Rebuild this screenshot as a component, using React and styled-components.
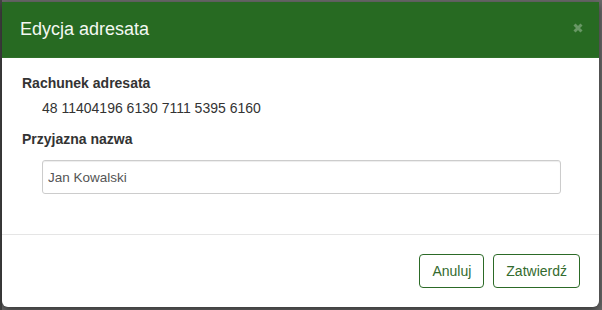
import React, { useState } from 'react';
import styled, { createGlobalStyle } from 'styled-components';

const GlobalStyle = createGlobalStyle`
  html, body {
    margin: 0;
    padding: 0;
    background: #5e5e5e;
  }
  body {
    font-family: "Liberation Sans", Arial, Helvetica, sans-serif;
    font-size: 14px;
    line-height: 1.42857;
    color: #333;
  }
`;

const Backdrop = styled.div`
  width: 602px;
  height: 310px;
  padding: 2px 0 0 2px;
  box-sizing: border-box;
  background: linear-gradient(to right, #454545 0, #454545 2px, #6a6a6a 2px);
`;

const Modal = styled.div`
  width: 597px;
  background: #fff;
  border-radius: 0 0 6px 6px;
  box-shadow: 0 3px 9px rgba(0, 0, 0, 0.5);
  overflow: hidden;
`;

const Header = styled.div`
  display: flex;
  align-items: center;
  justify-content: space-between;
  height: 55px;
  padding: 0 14px 0 18px;
  background: #276a22;
  border-bottom: 1px solid #2f7029;
`;

const Title = styled.h4`
  margin: 0;
  font-size: 18px;
  font-weight: 500;
  color: #f3f8f2;
  line-height: 1.42857;
`;

const Close = styled.button`
  display: flex;
  align-items: center;
  justify-content: center;
  width: 14px;
  height: 14px;
  border: 0;
  padding: 0;
  margin-top: -3px;
  background: transparent;
  color: #fff;
  opacity: 0.3;
  cursor: pointer;
`;

const Body = styled.div`
  padding: 15px 38px 40px 20px;
`;

const Label = styled.div`
  font-weight: 700;
  line-height: 20px;
  margin-bottom: ${(p) => p.$gap || 5}px;
`;

const Value = styled.div`
  padding-left: 20px;
  line-height: 20px;
  margin-bottom: 11px;
`;

const Input = styled.input`
  display: block;
  box-sizing: border-box;
  width: calc(100% - 20px);
  height: 34px;
  margin-left: 20px;
  padding: 6px 5px;
  border: 1px solid #ccc;
  border-radius: 3px;
  box-shadow: inset 0 1px 1px rgba(0, 0, 0, 0.075);
  font-family: inherit;
  font-size: 13.5px;
  color: #555;
  outline: none;
`;

const Footer = styled.div`
  display: flex;
  justify-content: flex-end;
  gap: 9px;
  padding: 19px 19px 19px;
  border-top: 1px solid #e5e5e5;
`;

const Button = styled.button`
  height: 34px;
  padding: 6px 12px;
  background: #fff;
  border: 1px solid #2c6a27;
  border-radius: 4px;
  font-family: inherit;
  font-size: 14px;
  color: #336b2e;
  cursor: pointer;

  &:hover {
    background: #eef5ed;
  }
`;

export default function App() {
  const [name, setName] = useState('Jan Kowalski');

  return (
    <>
      <GlobalStyle />
      <Backdrop>
        <Modal>
          <Header>
            <Title>Edycja adresata</Title>
            <Close aria-label="Zamknij">
              <svg width="10" height="10" viewBox="0 0 10 10">
                <path d="M1.5 1.5 L8.5 8.5 M8.5 1.5 L1.5 8.5" stroke="currentColor" strokeWidth="3" strokeLinecap="butt" />
              </svg>
            </Close>
          </Header>
          <Body>
            <Label>Rachunek adresata</Label>
            <Value>48 11404196 6130 7111 5395 6160</Value>
            <Label $gap={11}>Przyjazna nazwa</Label>
            <Input value={name} onChange={(e) => setName(e.target.value)} />
          </Body>
          <Footer>
            <Button>Anuluj</Button>
            <Button>Zatwierdź</Button>
          </Footer>
        </Modal>
      </Backdrop>
    </>
  );
}
